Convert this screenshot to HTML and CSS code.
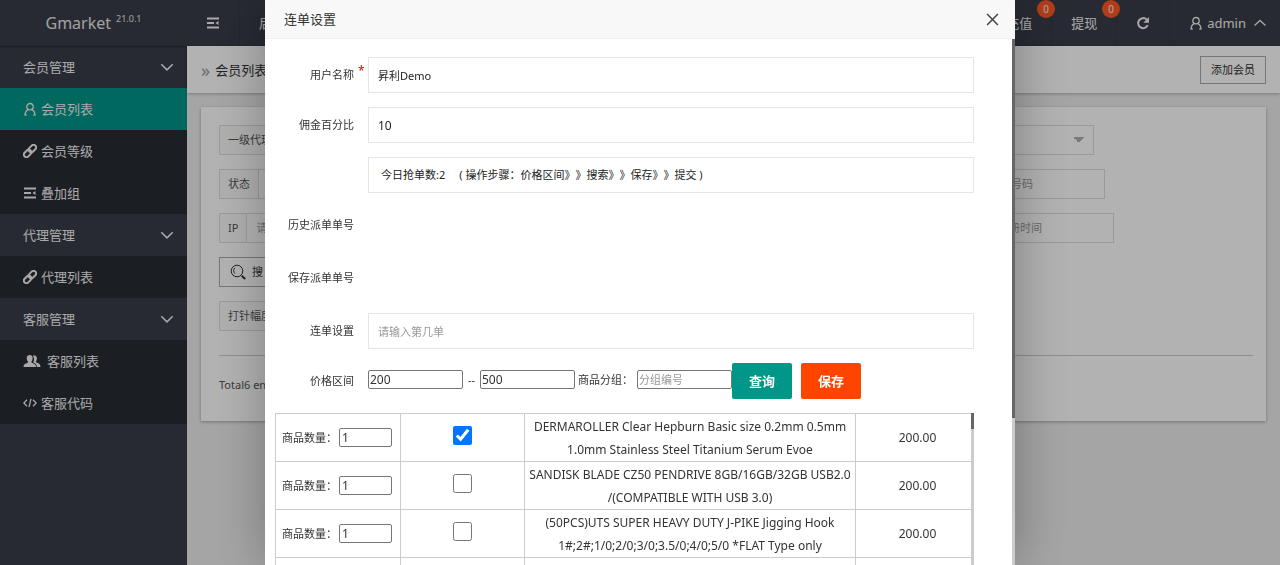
FILE: index.html
```html
<!DOCTYPE html>
<html lang="zh-CN">
<head>
<meta charset="utf-8">
<title>Gmarket</title>
<link rel="stylesheet" href="styles.css">
</head>
<body>
<svg class="defs" aria-hidden="true">
  <symbol id="i-user" viewBox="0 0 14 14"><circle cx="7" cy="4.7" r="3.2"/><path d="M2 13c.1-2.800 1.300-4.600 3.200-5.400M12 13c-.1-2.800-1.300-4.600-3.200-5.400M1.500 13h2.200M10.300 13h2.200"/></symbol>
  <symbol id="i-link" viewBox="0 0 14 14"><g transform="rotate(-45 7 7)" stroke-width="2"><rect x="-.6" y="4.400" width="8.400" height="5.200" rx="2.600"/><rect x="6.200" y="4.400" width="8.400" height="5.200" rx="2.600"/></g></symbol>
  <symbol id="i-list" viewBox="0 0 14 14"><path stroke-width="1.800" d="M1 2.500h12M1 7h7M1 11.500h12"/><path stroke="none" fill="currentColor" d="M12.500 5v4L9.500 7z"/></symbol>
  <symbol id="i-down" viewBox="0 0 14 14"><path stroke-width="1.500" d="M1.300 4.200 7 9.900l5.700-5.700"/></symbol>
  <symbol id="i-up" viewBox="0 0 14 14"><path d="M1.500 9.500 7 4.500l5.500 5"/></symbol>
  <symbol id="i-people" viewBox="0 0 18 14"><path stroke="none" fill="currentColor" d="M.5 13c0-2.700 1.500-3.400 4.200-4.300.5-.4.300-1.100 0-1.500C2.800 4.500 3.700 1 6.700 1s3.900 3.500 2 6.200c-.3.4-.4 1.100.1 1.500 2.700.9 4.200 1.600 4.200 4.300zM9.800 1.700c3.500-1.100 5.200 2 3.400 5.300-.3.600-.3 1.200.3 1.500 2.400.9 4 1.500 4 4.500h-3.600c0-2.600-1.200-3.600-3.700-4.600 1.200-2.400 1.200-4.900-.4-6.700z"/></symbol>
  <symbol id="i-code" viewBox="0 0 14 14"><path d="M4 3.700.8 7 4 10.300M10 3.700 13.200 7 10 10.300M8 2.800 6 11.200"/></symbol>
  <symbol id="i-refresh" viewBox="0 0 14 14"><path stroke-width="2" d="M11.700 9.200A5 5 0 1 1 10.600 3.500"/><path stroke="none" fill="currentColor" d="M13 1v5.700H7.300z"/></symbol>
  <symbol id="i-search" viewBox="0 0 16 16"><circle cx="7" cy="7" r="5.800"/><path d="M4.800 3.800c-1.500 1.600-1.500 4 0 5.800"/><path stroke-width="2" d="m11.700 11.700 3.500 3.200"/></symbol>
</svg>

<div class="app">
  <aside class="side">
    <div class="logo">Gmarket <sup>21.0.1</sup></div>
    <nav>
      <a class="group" href="#">会员管理<svg class="icon"><use href="#i-down"/></svg></a>
      <a class="item active" href="#"><svg class="icon"><use href="#i-user"/></svg>会员列表</a>
      <a class="item" href="#"><svg class="icon"><use href="#i-link"/></svg>会员等级</a>
      <a class="item" href="#"><svg class="icon"><use href="#i-list"/></svg>叠加组</a>
      <a class="group" href="#">代理管理<svg class="icon"><use href="#i-down"/></svg></a>
      <a class="item" href="#"><svg class="icon"><use href="#i-link"/></svg>代理列表</a>
      <a class="group" href="#">客服管理<svg class="icon"><use href="#i-down"/></svg></a>
      <a class="item" href="#"><svg class="icon wide"><use href="#i-people"/></svg>客服列表</a>
      <a class="item" href="#"><svg class="icon"><use href="#i-code"/></svg>客服代码</a>
    </nav>
  </aside>
  <div class="main">
    <header class="top">
      <a href="#" aria-label="菜单"><svg class="icon"><use href="#i-list"/></svg></a>
      <a href="#">后台</a>
      <span class="spacer"></span>
      <a href="#">充值<span class="badge">0</span></a>
      <a href="#">提现<span class="badge">0</span></a>
      <a href="#" aria-label="刷新"><svg class="icon"><use href="#i-refresh"/></svg></a>
      <a class="account" href="#"><svg class="icon"><use href="#i-user"/></svg>admin<svg class="icon caret"><use href="#i-up"/></svg></a>
    </header>
    <div class="crumb">
      <span class="arrows">»</span><span>会员列表</span>
      <button class="btn-line add" type="button">添加会员</button>
    </div>
    <section class="card">
      <form class="filters">
        <div class="frow frow-a">
          <label class="field"><span>一级代理</span><input type="text"></label>
          <select aria-label="代理"><option></option></select>
        </div>
        <div class="frow frow-b">
          <label class="field"><span>状态</span><input type="text"></label>
          <input type="text" aria-label="手机号码" placeholder="请输入手机号码">
        </div>
        <div class="frow frow-c">
          <label class="field"><span>IP</span><input type="text" placeholder="请输入IP"></label>
          <input type="text" aria-label="注册时间" placeholder="请选择注册时间">
        </div>
        <div class="frow"><button class="btn-line search" type="button"><svg class="icon"><use href="#i-search"/></svg>搜 索</button></div>
        <div class="frow"><label class="field"><span>打针幅度</span><input type="text"></label></div>
      </form>
      <hr>
      <p class="total">Total6 entries</p>
    </section>
  </div>
</div>

<div class="shade">
  <div class="dialog" role="dialog" aria-labelledby="dlg-title">
    <div class="dlg-head">
      <h2 id="dlg-title">连单设置</h2>
      <button type="button" aria-label="关闭"><svg viewBox="0 0 12 12"><path d="m1 1 10 10M11 1 1 11"/></svg></button>
    </div>
    <div class="dlg-body">
      <form class="form">
        <div class="row"><label class="required" for="name">用户名称</label><input id="name" class="text name" type="text" value="昇利Demo"></div>
        <div class="row"><label for="rate">佣金百分比</label><input id="rate" class="text" type="text" value="10"></div>
        <div class="row"><label></label><div class="text note"><span>今日抢单数:2</span><span>( 操作步骤：价格区间》》搜索》》保存》》提交 )</span></div></div>
        <div class="row tall"><label>历史派单单号</label></div>
        <div class="row tall"><label>保存派单单号</label></div>
        <div class="row"><label for="nth">连单设置</label><input id="nth" class="text cjk" type="text" placeholder="请输入第几单"></div>
        <div class="row">
          <label for="min">价格区间</label>
          <div class="range">
            <div class="inline">
              <input id="min" class="small" type="text" value="200"><span class="dash">--</span><input class="small" type="text" value="500" aria-label="最高价格">
              <label for="grp">商品分组：</label><input id="grp" class="small cjk" type="text" placeholder="分组编号">
            </div>
            <button class="btn query" type="button">查询</button>
            <button class="btn save" type="button">保存</button>
          </div>
        </div>
      </form>
      <div class="goods">
        <table>
          <colgroup><col class="c-qty"><col class="c-check"><col><col class="c-price"></colgroup>
          <tr><td><label class="qty">商品数量：<input type="text" value="1"></label></td><td><input type="checkbox" checked aria-label="选择"></td><td>DERMAROLLER Clear Hepburn Basic size 0.2mm 0.5mm 1.0mm Stainless Steel Titanium Serum Evoe</td><td class="price">200.00</td></tr>
          <tr><td><label class="qty">商品数量：<input type="text" value="1"></label></td><td><input type="checkbox" aria-label="选择"></td><td>SANDISK BLADE CZ50 PENDRIVE 8GB/16GB/32GB USB2.0 /(COMPATIBLE WITH USB 3.0)</td><td class="price">200.00</td></tr>
          <tr><td><label class="qty">商品数量：<input type="text" value="1"></label></td><td><input type="checkbox" aria-label="选择"></td><td>(50PCS)UTS SUPER HEAVY DUTY J-PIKE Jigging Hook 1#;2#;1/0;2/0;3/0;3.5/0;4/0;5/0 *FLAT Type only</td><td class="price">200.00</td></tr>
          <tr><td></td><td></td><td></td><td></td></tr>
        </table>
        <div class="bar"><i></i></div>
      </div>
    </div>
    <div class="bar outer"><i></i></div>
  </div>
</div>
</body>
</html>
```

FILE: styles.css
```css
* { box-sizing: border-box; }
body { margin: 0; height: 100vh; overflow: hidden; background: #ececec; color: #333; font: 12px/22px "Noto Sans", "Noto Sans CJK SC", sans-serif; text-spacing-trim: space-all; }
a { color: inherit; text-decoration: none; }
input, button, select { font: inherit; color: inherit; margin: 0; }
.defs { position: absolute; width: 0; height: 0; }
.icon { width: 14px; height: 14px; flex: none; fill: none; stroke: currentColor; stroke-width: 1.3; }
.icon.wide { width: 18px; margin-right: 2px; }

.app { display: flex; height: 100%; }
.side { width: 187px; flex: none; background: #393d49; color: #f2f2f2; font-size: 13px; }
.logo { height: 46px; display: flex; align-items: center; justify-content: center; gap: 5px; font-size: 16px; color: #e6e6e6; box-shadow: 0 1px 2px rgba(0, 0, 0, .3); }
.logo sup { font-size: 9px; line-height: 12px; margin-bottom: 8px; }
.side nav a { display: flex; align-items: center; height: 42px; padding: 0 13px 0 23px; }
.side .group { justify-content: space-between; }
.side .item { gap: 4px; background: #282b33; }
.side .item.active { background: #009688; }

.main { flex: 1; min-width: 0; }
.top { display: flex; height: 46px; background: #393d49; color: #f2f2f2; font-size: 13px; }
.top a { position: relative; display: flex; align-items: center; padding: 0 19px; border-right: 1px solid #343843; }
.top .account { gap: 4px; padding: 0 13px 0 19px; border: 0; }
.account .caret { margin-left: 3px; }
.spacer { flex: 1; }
.badge { position: absolute; top: 0; right: -4px; width: 18px; height: 18px; border-radius: 50%; background: #ff5722; font-size: 10px; line-height: 18px; text-align: center; z-index: 1; }

.crumb { display: flex; align-items: center; gap: 5px; height: 47px; padding: 0 14px; background: #fff; font-size: 13px; box-shadow: 0 1px 3px rgba(0, 0, 0, .25); }
.arrows { font-size: 18px; color: #999; }
.btn-line { height: 30px; border: 1px solid #aaa; background: #fff; font-size: 11px; padding: 0 10px; }
.add { margin-left: auto; height: 28px; line-height: 20px; }
.card { margin: 14px; padding: 18px 18px 25px; background: #fff; box-shadow: 0 1px 3px rgba(0, 0, 0, .3); }
.filters { display: grid; gap: 14px; font-size: 11px; }
.frow { display: flex; justify-content: space-between; height: 30px; }
.frow-a { max-width: 875px; }
.frow-b { max-width: 886px; }
.frow-c { max-width: 895px; }
.field { display: flex; color: #555; }
.field span { padding: 0 8px; line-height: 28px; border: 1px solid #ddd; border-right: 0; background: #fbfbfb; }
.frow input, .frow select { width: 159px; border: 1px solid #ddd; background: #fff; padding: 0 9px; }
.frow select {
  appearance: none;
  background-image: linear-gradient(to bottom left, #b0b0b0 50%, transparent 50%), linear-gradient(to bottom right, #b0b0b0 50%, transparent 50%);
  background-size: 6px 6px;
  background-position: right 14px center, right 8px center;
  background-repeat: no-repeat;
}
.frow input::placeholder { color: #999; }
.search { display: flex; align-items: center; gap: 6px; padding: 0 10px; }
.search .icon { width: 16px; height: 16px; stroke-width: 1; }
hr { margin: 24px -5px 18px 0; border: 0; border-top: 1px solid #ccc; }
.total { margin: 0; font-size: 11px; color: #555; }

.shade { position: fixed; inset: 0; z-index: 10; display: flex; justify-content: center; background: rgba(0, 0, 0, .3); }
.dialog { position: relative; display: flex; flex-direction: column; width: 750px; max-width: 100%; background: #fff; box-shadow: 1px 1px 50px rgba(0, 0, 0, .3); }
.dlg-head { flex: none; display: flex; align-items: center; justify-content: space-between; height: 39px; padding: 0 16px 0 19px; background: #f8f8f8; border-bottom: 1px solid #f0f0f0; }
.dlg-head h2 { margin: 0; font-size: 13px; font-weight: 400; }
.dlg-head button { display: flex; padding: 0; border: 0; background: none; }
.dlg-head svg { width: 13px; height: 13px; fill: none; stroke: #444; stroke-width: 1.4; }
.dlg-body { flex: 1; min-height: 0; overflow: hidden; padding: 18px 41px 0 10px; }
.form { display: grid; gap: 14px; }
.row { display: flex; gap: 14px; height: 36px; align-items: center; }
.row.tall { height: 39px; align-items: flex-start; line-height: 36px; }
.row > label { position: relative; width: 79px; flex: none; text-align: right; font-size: 11px; }
.required::after { content: "*"; position: absolute; left: 83px; top: -4px; color: #f00; font-size: 12px; }
.text { flex: 1; min-width: 0; height: 36px; padding: 0 9px; border: 1px solid #e6e6e6; background: #fff; color: #222; }
.text.cjk, .small.cjk, .name, .note { font-size: 11px; }
.note { display: flex; align-items: center; gap: 14px; padding: 0 12px; }
.text::placeholder, .small::placeholder { color: #999; }
.range { display: flex; align-items: center; }
.inline { display: flex; align-items: center; gap: 3px; padding-bottom: 3px; font-size: 11px; line-height: 19px; }
.dash { width: 11px; text-align: center; }
.inline label { margin-right: 1px; }
.small { width: 95px; height: 19px; padding: 0 1px; border: 1px solid #767676; border-radius: 2px; background: #fff; font-size: 12px; }
.btn { width: 60px; height: 36px; border: 0; border-radius: 2px; color: #fff; font-size: 13px; font-weight: 600; }
.query { background: #009688; }
.save { background: #ff4400; margin-left: 9px; }

.goods { position: relative; margin-top: 14px; padding-right: 2px; }
table { width: 100%; table-layout: fixed; border-collapse: collapse; line-height: 23px; text-align: center; }
.c-qty { width: 125px; }
.c-check { width: 124px; }
.c-price { width: 116px; }
td { height: 48px; padding: 0 3px; border: 1px solid #ccc; }
.price { padding-left: 11px; }
.qty { display: flex; align-items: center; padding-left: 3px; gap: 2px; font-size: 11px; white-space: nowrap; }
.qty input { width: 53px; height: 19px; padding: 0 2px; border: 1px solid #767676; border-radius: 2px; background: #fff; font-size: 12px; }
td input[type="checkbox"] { display: block; width: 19px; height: 19px; margin: 0 auto 4px; accent-color: #0075ff; }
.bar { position: absolute; top: 0; right: 0; bottom: 0; width: 3px; background: #ccc; }
.bar i { display: block; height: 16px; background: #666; }
.bar.outer { top: 39px; }
.bar.outer i { height: 72%; }
```
